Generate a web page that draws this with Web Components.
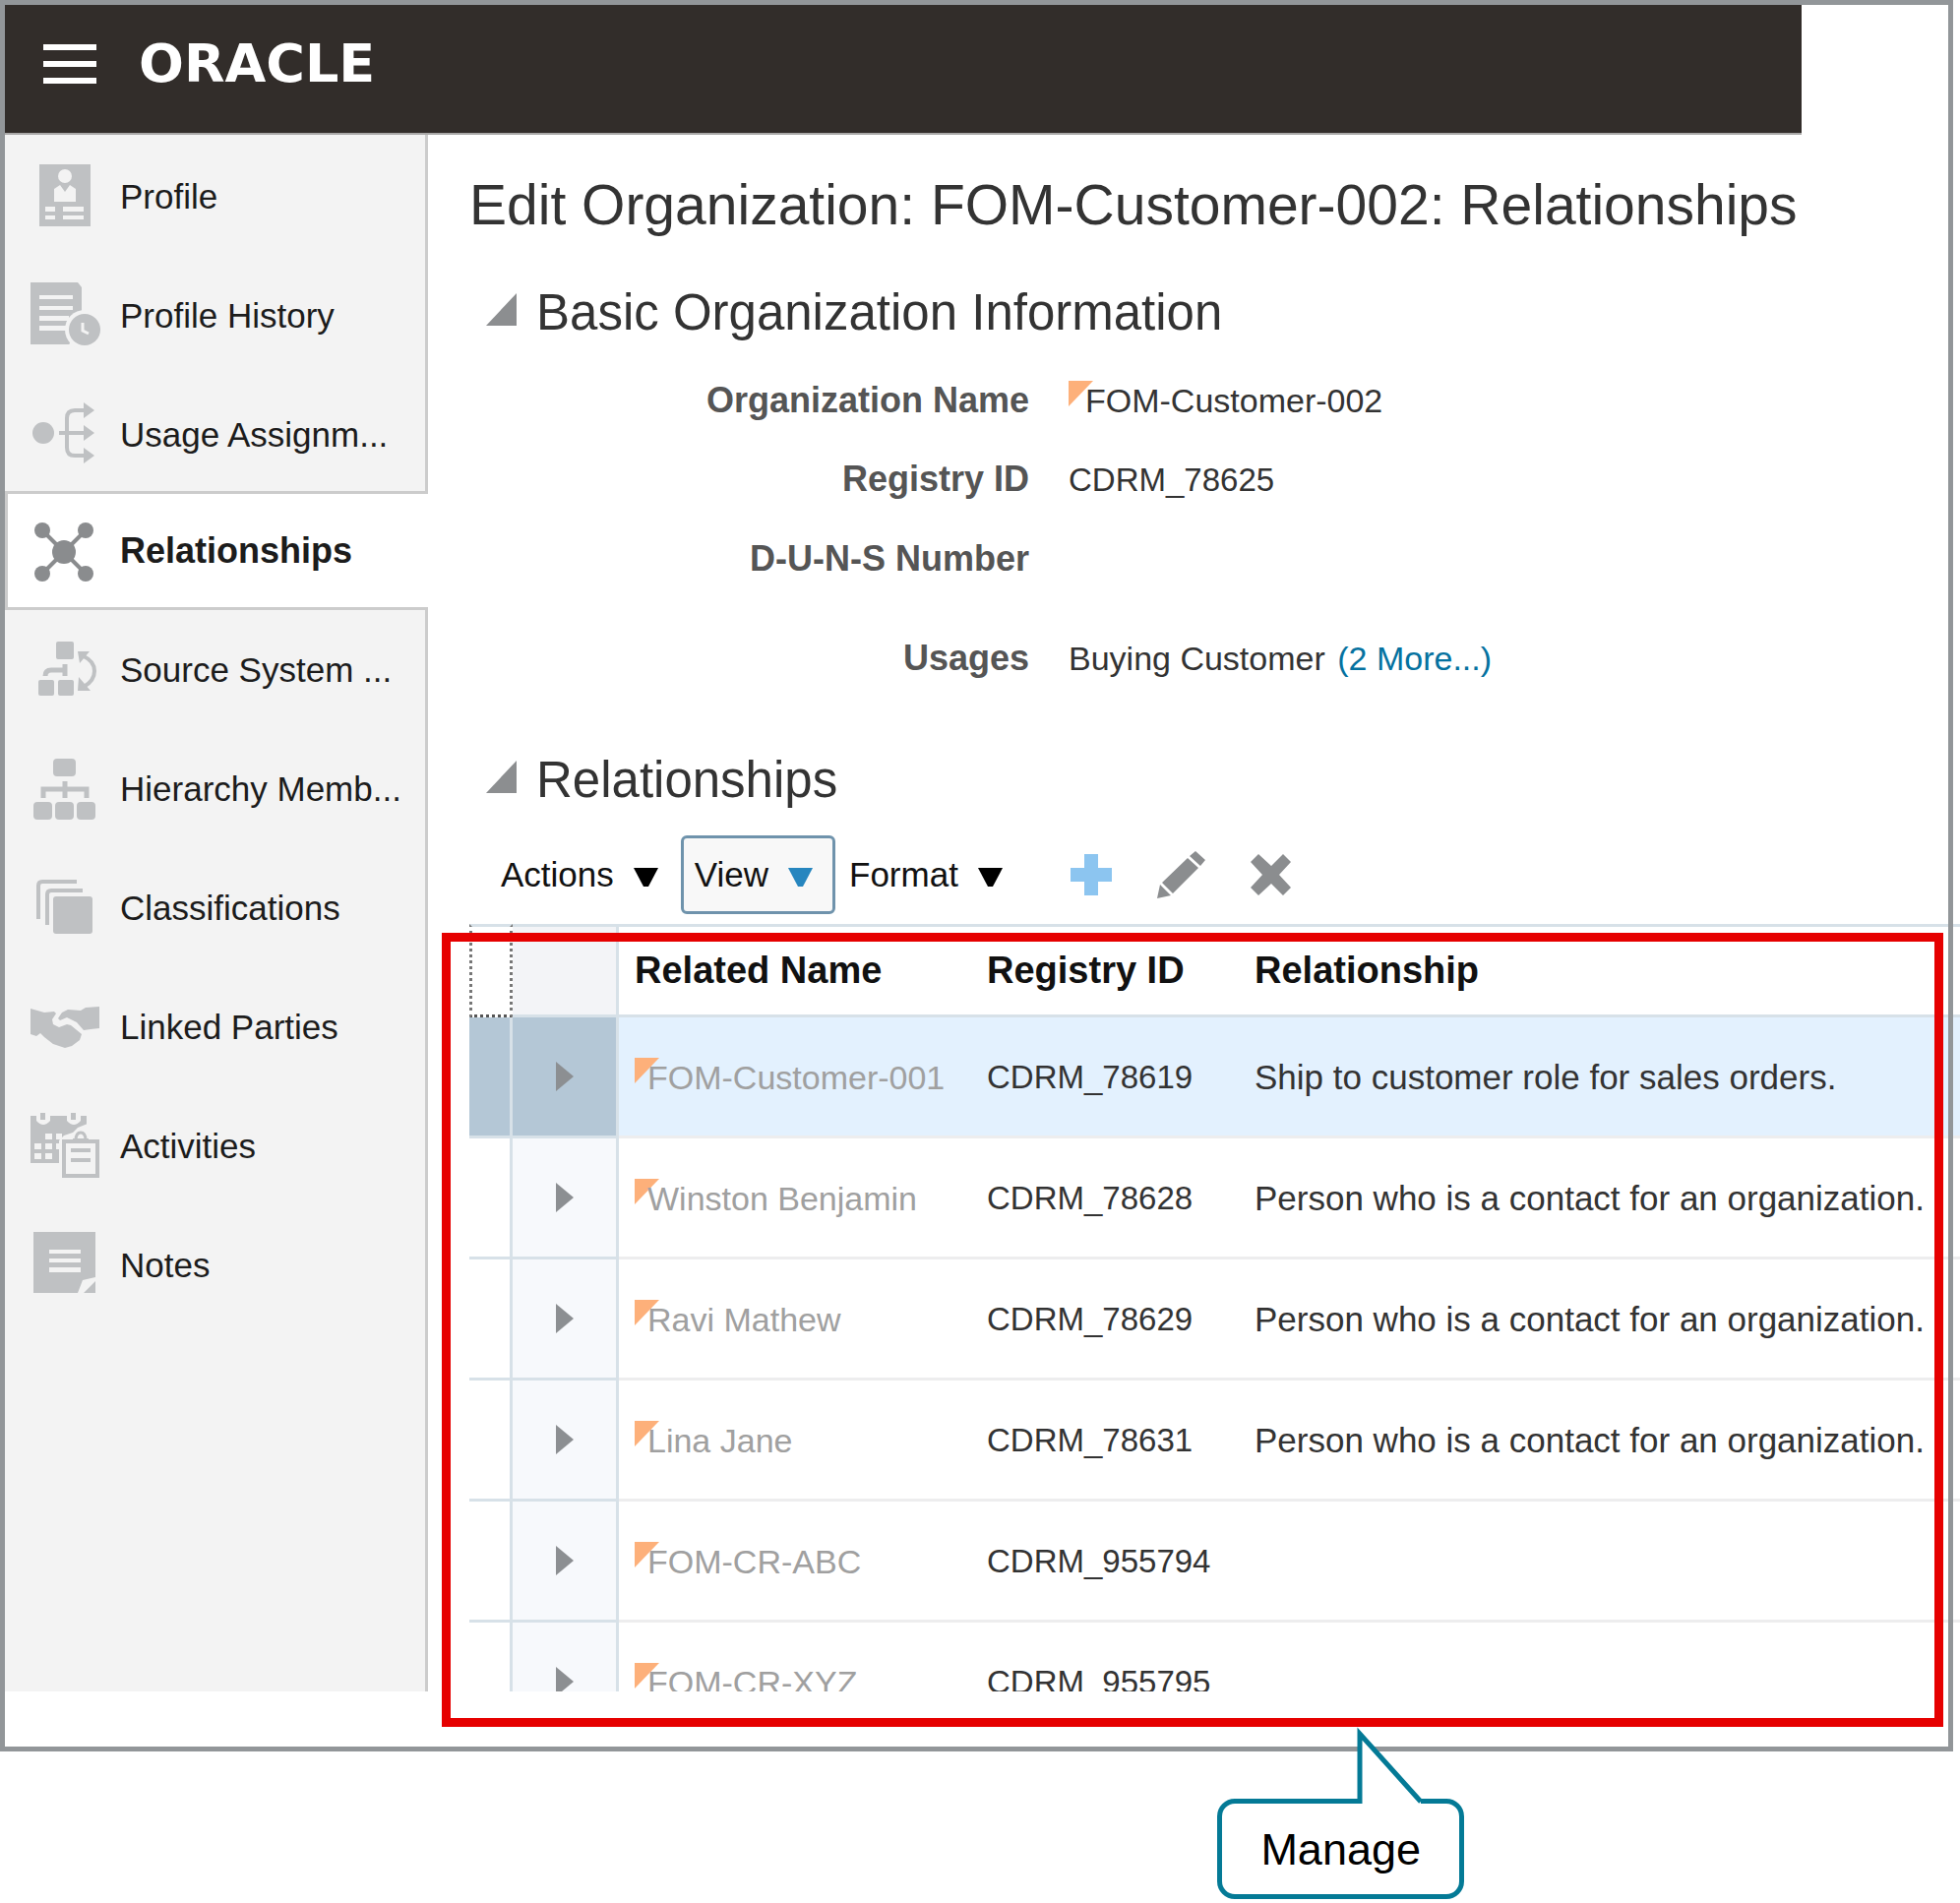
<!DOCTYPE html>
<html lang="en">
<head>
<meta charset="utf-8">
<title>Edit Organization: Relationships</title>
<style>
  body { margin: 0; background: #fff; color: #333; font-family: "Liberation Sans", Arial, sans-serif; font-size: 34px; line-height: 40px; }
</style>
</head>
<body>
<app-frame>
  <app-header slot="header"></app-header>
  <side-nav slot="nav">
    <nav-item icon="profile">Profile</nav-item>
    <nav-item icon="history">Profile History</nav-item>
    <nav-item icon="usage">Usage Assignm...</nav-item>
    <nav-item icon="relationships" selected>Relationships</nav-item>
    <nav-item icon="source">Source System ...</nav-item>
    <nav-item icon="hierarchy">Hierarchy Memb...</nav-item>
    <nav-item icon="classifications">Classifications</nav-item>
    <nav-item icon="linked">Linked Parties</nav-item>
    <nav-item icon="activities">Activities</nav-item>
    <nav-item icon="notes">Notes</nav-item>
  </side-nav>
  <page-title>Edit Organization: FOM-Customer-002: Relationships</page-title>
  <section-panel heading="Basic Organization Information">
    <info-list></info-list>
  </section-panel>
  <section-panel heading="Relationships">
    <table-toolbar></table-toolbar>
    <relationship-table></relationship-table>
  </section-panel>
</app-frame>
<call-out>Manage</call-out>

<script>
const define = (name, markup) => customElements.define(name, class extends HTMLElement {
  constructor() {
    super();
    this.attachShadow({ mode: 'open' });
  }
  connectedCallback() {
    this.shadowRoot.innerHTML = typeof markup === 'function' ? markup(this) : markup;
  }
});

define('app-frame', `
  <style>
    :host { display: block; position: relative; box-sizing: border-box; margin-right: 7px; padding: 5px 5px 61px; }
    :host::after { content: ""; position: absolute; inset: 0; border: 5px solid #929699; pointer-events: none; }
    .body { display: grid; grid-template-columns: 430px minmax(0, 1fr); }
    main { padding: 38px 0 0 42px; }
  </style>
  <slot name="header"></slot>
  <div class="body">
    <slot name="nav"></slot>
    <main><slot></slot></main>
  </div>`);

define('app-header', `
  <style>
    :host { display: block; margin-right: 149px; border-bottom: 2px solid #a9a8a7; }
    header { display: flex; align-items: center; gap: 42px; height: 130px; box-sizing: border-box; padding: 0 38px 10px; background: #322d2a; }
    button { border: 0; padding: 0; background: none; }
    svg { display: block; }
    .logo { color: #fff; font-family: "DejaVu Sans", sans-serif; font-size: 54px; font-weight: bold; line-height: 64px; text-decoration: none; }
  </style>
  <header>
    <button type="button" aria-label="Navigator">
      <svg width="56" height="42" viewBox="0 0 56 42" fill="#fff"><path d="M1 1h54v6H1zM1 18h54v6H1zM1 35h54v6H1z"/></svg>
    </button>
    <a class="logo" href="#home">ORACLE</a>
  </header>`);

define('side-nav', `
  <style>
    :host { display: block; background: linear-gradient(to left, #ccc 3px, #f3f3f3 3px); padding-top: 2px; }
  </style>
  <nav aria-label="Organization"><slot></slot></nav>`);

const icons = {
  profile: `<path d="M10 3h52v63H10z"/><g fill="var(--back)"><circle cx="36" cy="15" r="7"/><path d="M25 41V28l6-4 5 7 5-7 6 4v13zM16 46h10v5H16zM34 46h21v5H34zM16 55h10v4H16zM34 55h21v4H34z"/></g>`,
  history: `<path d="M1 2h48l4 5v58H1z"/><path fill="var(--back)" d="M10 15h34v4H10zM10 26h34v4H10zM10 36h30v5H10zM10 46h27v5H10zM53 30l18 5v31H40z"/><circle cx="56" cy="50" r="20" fill="var(--back)"/><circle cx="56" cy="50" r="16"/><path d="M54 43v8l6 3" fill="none" stroke="var(--back)" stroke-width="3"/>`,
  usage: `<circle cx="14" cy="34" r="11"/><path d="M56 11H46q-8 0-8 8v30q0 8 8 8h10M30 34h26" fill="none" stroke="currentColor" stroke-width="4"/><path d="M55 3l11 8-11 8zM55 26l11 8-11 8zM55 49l11 8-11 8z"/>`,
  relationships: `<path d="M13 15l44 44M57 15L13 59" stroke="currentColor" stroke-width="4"/><circle cx="35" cy="37" r="12"/><circle cx="13" cy="15" r="8"/><circle cx="57" cy="15" r="8"/><circle cx="13" cy="59" r="8"/><circle cx="57" cy="59" r="8"/>`,
  source: `<rect x="27" y="7" width="18" height="18" rx="2"/><rect x="9" y="46" width="16" height="16" rx="2"/><rect x="29" y="46" width="16" height="16" rx="2"/><path d="M36 30v12M36 36H22q-6 0-6 6" fill="none" stroke="currentColor" stroke-width="5"/><path d="M55 22q11 5 11 15T55 53" fill="none" stroke="currentColor" stroke-width="4"/><path d="M49 17h12L51 29zM49 57l1-14 12 14z"/>`,
  hierarchy: `<rect x="24" y="5" width="23" height="18" rx="4"/><rect x="4" y="49" width="19" height="18" rx="4"/><rect x="26" y="49" width="19" height="18" rx="4"/><rect x="48" y="49" width="19" height="18" rx="4"/><path d="M36 28v17M14 45v-9h44v9" fill="none" stroke="currentColor" stroke-width="5"/>`,
  classifications: `<rect x="24" y="24" width="40" height="38" rx="3"/><path d="M48 9H13q-4 0-4 4v34M54 18H22q-4 0-4 4v31" fill="none" stroke="currentColor" stroke-width="4"/>`,
  linked: `<path d="M1 17l14 4 10-1 2 2-4 6 1 5 6 3 8-3 4 1 11 9-2 6-8 6-7 2-12-4-9-7-4-4-4 3-6-2z"/><path d="M71 15v22l-9 1-7 1-7-8-10-5-7 3-2-2 4-6 6-3 13 1 5-3z"/>`,
  activities: `<path d="M1 5h57v12H1z"/><path fill-rule="evenodd" d="M1 15h57v38H1zM16 23v6h7v-6zM5 33v6h7v-6zM16 33v6h7v-6zM5 43v6h7v-6zM16 43v6h7v-6z"/><path fill="var(--back)" d="M27 23h6v6h-6zM27 33h6v6h-6zM7 3h14v7q-7 8-14 0zM38 3h14v7q-7 8-14 0zM30 56V30l5-5 9-3 5-5 10-4 2-1v44z"/><path d="M11 2h5v7h-5zM42 2h5v7h-5z"/><path d="M35 31h34v35H35z" fill="var(--back)" stroke="currentColor" stroke-width="4"/><path d="M42 38h20v4H42zM42 48h20v4H42zM44 28h16v5H44z"/><path d="M47 30q0-8 5-8t5 8" fill="none" stroke="currentColor" stroke-width="3"/>`,
  notes: `<path d="M4 2h63v46l-13 3-5 13H4zM67 52v12H55z"/><path fill="var(--back)" d="M20 20h32v4H20zM20 29h32v4H20zM20 38h32v5H20z"/>`
};

define('nav-item', el => `
  <style>
    :host { display: block; --back: #f3f3f3; }
    a { display: flex; align-items: center; gap: 20px; height: 121px; box-sizing: border-box; padding-left: 22px;
        border-left: 3px solid transparent; color: #1c1c1c; font-size: 35px; text-decoration: none; white-space: nowrap; }
    svg { flex: none; color: #bfc1c3; fill: currentColor; }
    :host([selected]) { --back: #fff; margin-top: -3px; }
    :host([selected]) a { border: solid #ccc; border-width: 3px 0 3px 3px; background: #fff; font-size: 36px; font-weight: bold; }
    :host([selected]) svg { color: #8a8c8e; }
  </style>
  <a href="#${el.getAttribute('icon')}"${el.hasAttribute('selected') ? ' aria-current="page"' : ''}>
    <svg width="72" height="72" viewBox="0 0 72 72" aria-hidden="true">${icons[el.getAttribute('icon')]}</svg>
    <span><slot></slot></span>
  </a>`);

define('page-title', `
  <style>
    :host { display: block; }
    h1 { margin: 0; font-size: 57px; line-height: 66px; font-weight: normal; white-space: nowrap; color: #333; }
  </style>
  <h1><slot></slot></h1>`);

define('section-panel', el => `
  <style>
    :host { display: block; margin-top: 48px; }
    :host(:last-of-type) { margin-top: 76px; }
    h2 { display: flex; align-items: center; gap: 20px; margin: 0; padding-left: 17px; font-size: 51px; line-height: 58px; font-weight: normal; color: #333; }
    svg { padding-bottom: 8px; }
  </style>
  <h2><svg width="31" height="33" viewBox="0 0 31 33" aria-hidden="true"><path d="M31 0v33H0z" fill="#8c8e90"/></svg>${el.getAttribute('heading')}</h2>
  <slot></slot>`);

define('info-list', `
  <style>
    :host { display: block; margin-top: 40px; }
    dl { display: grid; grid-template-columns: 569px 1fr; gap: 40px; align-items: baseline; margin: 0 0 -1px; }
    dt { text-align: right; font-weight: bold; font-size: 36px; color: #555; }
    dd { margin: 0; }
    .usage { padding-top: 21px; }
    .id { font-size: 33px; }
    .changed { position: relative; padding-left: 17px; }
    .changed svg { position: absolute; left: 0; top: 0; }
    .changed span { position: relative; }
    a { margin-left: 3px; color: #0572a0; text-decoration: none; }
  </style>
  <dl>
    <dt>Organization Name</dt>
    <dd class="changed"><svg width="25" height="26" viewBox="0 0 25 26" aria-hidden="true"><path d="M0 0h25L0 26z" fill="#fdb07a"/></svg><span>FOM-Customer-002</span></dd>
    <dt>Registry ID</dt><dd class="id">CDRM_78625</dd>
    <dt>D-U-N-S Number</dt><dd></dd>
    <dt class="usage">Usages</dt><dd class="usage">Buying Customer <a href="#usages">(2 More...)</a></dd>
  </dl>`);

const menuButton = (label, cls = '') => `<button type="button" class="menu ${cls}" aria-haspopup="menu">${label}<svg width="25" height="24" viewBox="0 0 25 24" aria-hidden="true"><path d="M0 5h25L15 24h-5z"/></svg></button>`;

define('table-toolbar', `
  <style>
    :host { display: flex; align-items: center; height: 80px; margin: 27px 0 10px; padding-left: 18px; }
    button { flex: none; background: none; border: 0; padding: 0; font: inherit; color: #111; }
    svg { display: block; }
    .menu { display: flex; align-items: center; gap: 20px; height: 80px; padding: 0 20px 0 11px; border: 3px solid transparent; font-size: 35px; }
    .active { border-color: #6f93ac; border-radius: 6px; background: #f8f8f8; }
    .active svg { fill: #2786bf; }
    .icons { display: flex; align-items: center; gap: 46px; margin-left: 46px; }
  </style>
  ${menuButton('Actions')}${menuButton('View', 'active')}${menuButton('Format')}
  <div class="icons">
    <button type="button" aria-label="Add"><svg width="42" height="42" viewBox="0 0 42 42"><path d="M14 0h14v14h14v14H28v14H14V28H0V14h14z" fill="#8cc5f0"/></svg></button>
    <button type="button" aria-label="Edit"><svg width="49" height="48" viewBox="0 0 49 48" fill="#8b8d8f"><path d="M39 0l10 9-5 6L33 5zM31 7l11 10-26 26L5 32zM3 34l11 11-14 3z"/></svg></button>
    <button type="button" aria-label="Delete"><svg width="41" height="42" viewBox="0 0 41 42"><path d="M8 0l13 12L33 0l8 8-12 13 12 13-8 8-12-12L8 42l-8-8 12-13L0 8z" fill="#8b8d8f"/></svg></button>
  </div>`);

const contact = 'Person who is a contact for an organization.';
const rows = [
  ['FOM-Customer-001', 'CDRM_78619', 'Ship to customer role for sales orders.'],
  ['Winston Benjamin', 'CDRM_78628', contact],
  ['Ravi Mathew', 'CDRM_78629', contact],
  ['Lina Jane', 'CDRM_78631', contact],
  ['FOM-CR-ABC', 'CDRM_955794', ''],
  ['FOM-CR-XYZ', 'CDRM_955795', '']
];

define('relationship-table', `
  <style>
    :host { display: block; position: relative; margin-right: -12px; }
    .view { height: 780px; overflow: hidden; }
    .highlight { position: absolute; inset: 9px 17px -36px -28px; border: 9px solid #e60000; pointer-events: none; }
    table { width: 100%; table-layout: fixed; border-collapse: separate; border-spacing: 0; }
    .c1 { width: 44px; } .c2 { width: 108px; } .c3 { width: 356px; } .c4 { width: 276px; }
    th, td { box-sizing: border-box; padding: 0; text-align: left; white-space: nowrap; vertical-align: middle; }
    th { height: 95px; border-top: 3px solid #d7e1e8; border-bottom: 3px solid #d7e1e8; padding-bottom: 2px; font-size: 38px; color: #111; }
    td { height: 123px; padding-top: 2px; border-bottom: 3px solid #ededee; }
    th:nth-child(3), td:nth-child(3) { padding-left: 16px; }
    th:nth-child(4), td:nth-child(4) { padding-left: 18px; }
    th:nth-child(5), td:nth-child(5) { padding-left: 14px; }
    th:first-child { border-left: 3px dotted #777; border-right: 3px dotted #777; border-bottom: 3px dotted #555; }
    td:first-child, td:nth-child(2) { border-right: 3px solid #d7e1e8; border-bottom-color: #d7e1e8; }
    th:nth-child(2) { background: #f3f4f7; border-right: 3px solid #d7e1e8; }
    td:nth-child(2) { padding-top: 0; background: #f7f9fc; }
    td:nth-child(4) { font-size: 33px; }
    td:nth-child(5) { font-size: 35px; }
    tr.current td { background: #e3f1fe; }
    tr.current td:nth-child(-n+2) { background: #b4c7d6; }
    button { display: block; margin: 0 auto; padding: 0; border: 0; background: none; }
    button svg { display: block; }
    .name { position: relative; padding-left: 13px; color: #a0a0a0; }
    .name svg { position: absolute; left: 0; top: 0; }
    .name span { position: relative; }
  </style>
  <div class="view">
    <table>
      <colgroup><col class="c1"><col class="c2"><col class="c3"><col class="c4"><col></colgroup>
      <thead><tr><th></th><th></th><th>Related Name</th><th>Registry ID</th><th>Relationship</th></tr></thead>
      <tbody>${rows.map(([name, id, rel], i) => `
        <tr${i ? '' : ' class="current"'}>
          <td></td>
          <td><button type="button" aria-label="Expand ${name}"><svg width="18" height="30" viewBox="0 0 18 30"><path d="M0 0l18 15L0 30z" fill="#8c8f92"/></svg></button></td>
          <td><div class="name"><svg width="25" height="26" viewBox="0 0 25 26" aria-hidden="true"><path d="M0 0h25L0 26z" fill="#fdb07a"/></svg><span>${name}</span></div></td>
          <td>${id}</td>
          <td>${rel}</td>
        </tr>`).join('')}
      </tbody>
    </table>
  </div>
  <div class="highlight"></div>`);

define('call-out', `
  <style>
    :host { display: flex; justify-content: flex-end; padding: 48px 504px 4px 0; }
    .bubble { position: relative; padding: 22px 39px 20px; border: 5px solid #047a96; border-radius: 18px; background: #fff; color: #000; font-size: 45px; line-height: 50px; }
    svg { position: absolute; left: 135px; top: -80px; }
  </style>
  <div class="bubble"><slot></slot>
    <svg width="75" height="82" viewBox="0 0 75 82" aria-hidden="true"><path d="M5 80V9l62 69v2z" fill="#fff"/><path d="M5 80V9l62 69" fill="none" stroke="#047a96" stroke-width="5" stroke-miterlimit="8"/></svg>
  </div>`);
</script>
</body>
</html>
